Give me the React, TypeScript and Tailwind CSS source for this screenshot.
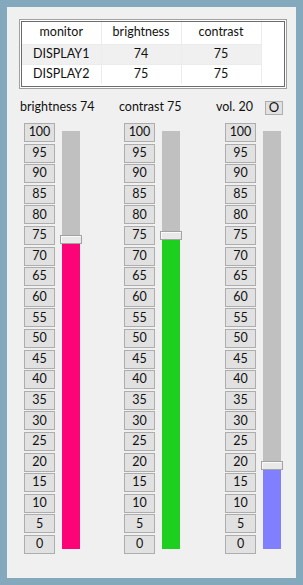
import React from 'react';

const levels = [100, 95, 90, 85, 80, 75, 70, 65, 60, 55, 50, 45, 40, 35, 30, 25, 20, 15, 10, 5, 0];

const rows = [
  { monitor: 'DISPLAY1', brightness: 74, contrast: 75 },
  { monitor: 'DISPLAY2', brightness: 75, contrast: 75 },
];

// track is 418px tall, thumb sits centred on the value
const Slider: React.FC<{ value: number; color: string }> = ({ value, color }) => {
  const fill = Math.round((418 * value) / 100 - 4.5);
  return (
    <div className="mt-[8px] flex h-[418px] w-[22px] flex-col items-center">
      <div className="w-[18px] flex-1 bg-[#c0c0c0]" />
      <div className="h-[9px] w-[22px] shrink-0 border border-[#a3a3a3] bg-[#e9e9e9] shadow-[inset_1px_1px_0_#fafafa]" />
      <div className="w-[18px] shrink-0" style={{ height: fill, background: color }} />
    </div>
  );
};

const LevelButtons: React.FC = () => (
  <div className="flex h-[431px] w-[31px] flex-col justify-between">
    {levels.map((lv) => (
      <button
        key={lv}
        className="flex h-[19px] w-[31px] items-center justify-center border border-[#adadad] bg-[#e1e1e1] text-[12.5px] leading-none text-[#111]"
      >
        {lv}
      </button>
    ))}
  </div>
);

export default function App() {
  return (
    <div
      className="box-border h-[585px] w-[303px] border-[7px] border-[#84a9bc] bg-[#f0f0f0] text-[12.5px] text-[#111]"
      style={{ fontFamily: 'Lato, "Noto Sans", sans-serif' }}
    >
      {/* monitor table */}
      <div className="ml-[12px] mt-[12px] h-[70px] w-[268px] border border-[#a0a0a0] bg-white p-[1px]">
        <div className="h-full w-full border border-[#6b6b6b] bg-white">
          <table className="border-collapse text-center">
            <thead>
              <tr className="h-[22px]">
                <th className="w-[79px] border-r border-[#ececec] font-normal">monitor</th>
                <th className="w-[80px] border-r border-[#ececec] font-normal">brightness</th>
                <th className="w-[80px] border-r border-[#ececec] font-normal">contrast</th>
              </tr>
            </thead>
            <tbody>
              {rows.map((r, i) => (
                <tr key={r.monitor} className={`h-[20px] ${i === 0 ? 'bg-[#f0f0f0]' : 'bg-white'}`}>
                  <td className="border-r border-t border-[#ececec]">{r.monitor}</td>
                  <td className="border-r border-t border-[#ececec]">{r.brightness}</td>
                  <td className="border-r border-t border-[#ececec]">{r.contrast}</td>
                </tr>
              ))}
            </tbody>
          </table>
        </div>
      </div>

      {/* labels */}
      <div className="mt-[12px] flex h-[13px] items-center pl-[13px]">
        <div className="w-[99px]">brightness 74</div>
        <div className="w-[97px]">contrast 75</div>
        <div className="w-[49px]">vol. 20</div>
        <button className="flex h-[14px] w-[18px] items-center justify-center border border-[#adadad] bg-[#e1e1e1] text-[13px] leading-none">
          O
        </button>
      </div>

      {/* sliders */}
      <div className="mt-[9px] flex pl-[17px]">
        <div className="flex gap-[5px]">
          <LevelButtons />
          <Slider value={74} color="#fc0478" />
        </div>
        <div className="ml-[42px] flex gap-[5px]">
          <LevelButtons />
          <Slider value={75} color="#1fcf1f" />
        </div>
        <div className="ml-[43px] flex gap-[5px]">
          <LevelButtons />
          <Slider value={20} color="#8080ff" />
        </div>
      </div>
    </div>
  );
}
